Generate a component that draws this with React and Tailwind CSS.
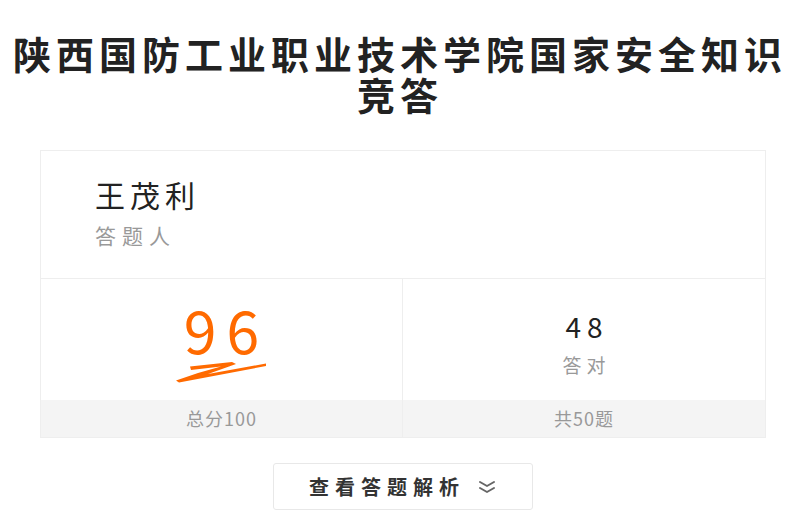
const font = { fontFamily: '"Noto Sans CJK SC", "Noto Sans", sans-serif' };

function Swoosh() {
  return (
    <svg width="92" height="22" viewBox="0 0 92 22" className="block">
      <path
        d="M14 5.5 L56 1 L60 3 L32 13 L90 2.5 L90 5 L3 21.5 L0 19.5 L22 12 L45 5.6 L15 9 Z"
        fill="#ff6a00"
      />
    </svg>
  );
}

function DoubleChevron() {
  return (
    <svg width="20" height="14" viewBox="0 0 20 14" fill="none" stroke="#666" strokeWidth="2" strokeLinecap="round" strokeLinejoin="round">
      <path d="M3 2 L10 6 L17 2" />
      <path d="M3 8 L10 12 L17 8" />
    </svg>
  );
}

export default function App() {
  return (
    <div className="w-[800px] h-[532px] overflow-hidden bg-white text-[#222]" style={font}>
      <h1 className="pt-[32px] text-center text-[38px] leading-[41px] font-bold tracking-[5px] text-[#222]">
        陕西国防工业职业技术学院国家安全知识竞答
      </h1>

      <div className="mx-[40px] mt-[36px] w-[726px] border border-[#eeeeee]">
        <div className="h-[128px] border-b border-[#eeeeee] pl-[54px] pt-[24px]">
          <div className="text-[30px] leading-[38px] tracking-[5px] text-[#222]">王茂利</div>
          <div className="mt-[10px] text-[21px] leading-[24px] tracking-[6px] text-[#999]">答题人</div>
        </div>

        <div className="grid grid-cols-2">
          <div className="flex flex-col border-r border-[#eeeeee]">
            <div className="flex h-[121px] flex-col items-center pt-[19px]">
              <div className="text-[59px] leading-[62px] tracking-[10px] pl-[10px] text-[#ff6a00]">96</div>
              <div className="mt-[1px]">
                <Swoosh />
              </div>
            </div>
            <div className="flex h-[37px] items-center justify-center bg-[#f4f4f4] text-[18px] tracking-[1px] text-[#999]">
              总分100
            </div>
          </div>
          <div className="flex flex-col">
            <div className="flex h-[121px] flex-col items-center pt-[32px]">
              <div className="text-[28px] leading-[30px] tracking-[6px] pl-[6px] text-[#222]">48</div>
              <div className="mt-[13px] text-[19px] leading-[22px] tracking-[5px] pl-[5px] text-[#999]">答对</div>
            </div>
            <div className="flex h-[37px] items-center justify-center bg-[#f4f4f4] text-[18px] tracking-[1px] text-[#999]">
              共50题
            </div>
          </div>
        </div>
      </div>

      <div className="mt-[25px] flex justify-center pl-[6px]">
        <button className="flex h-[47px] w-[260px] items-center justify-center gap-[12px] rounded-[3px] border border-[#e8e8e8] bg-white">
          <span className="text-[20px] font-bold tracking-[6px] text-[#333]">查看答题解析</span>
          <DoubleChevron />
        </button>
      </div>
    </div>
  );
}
